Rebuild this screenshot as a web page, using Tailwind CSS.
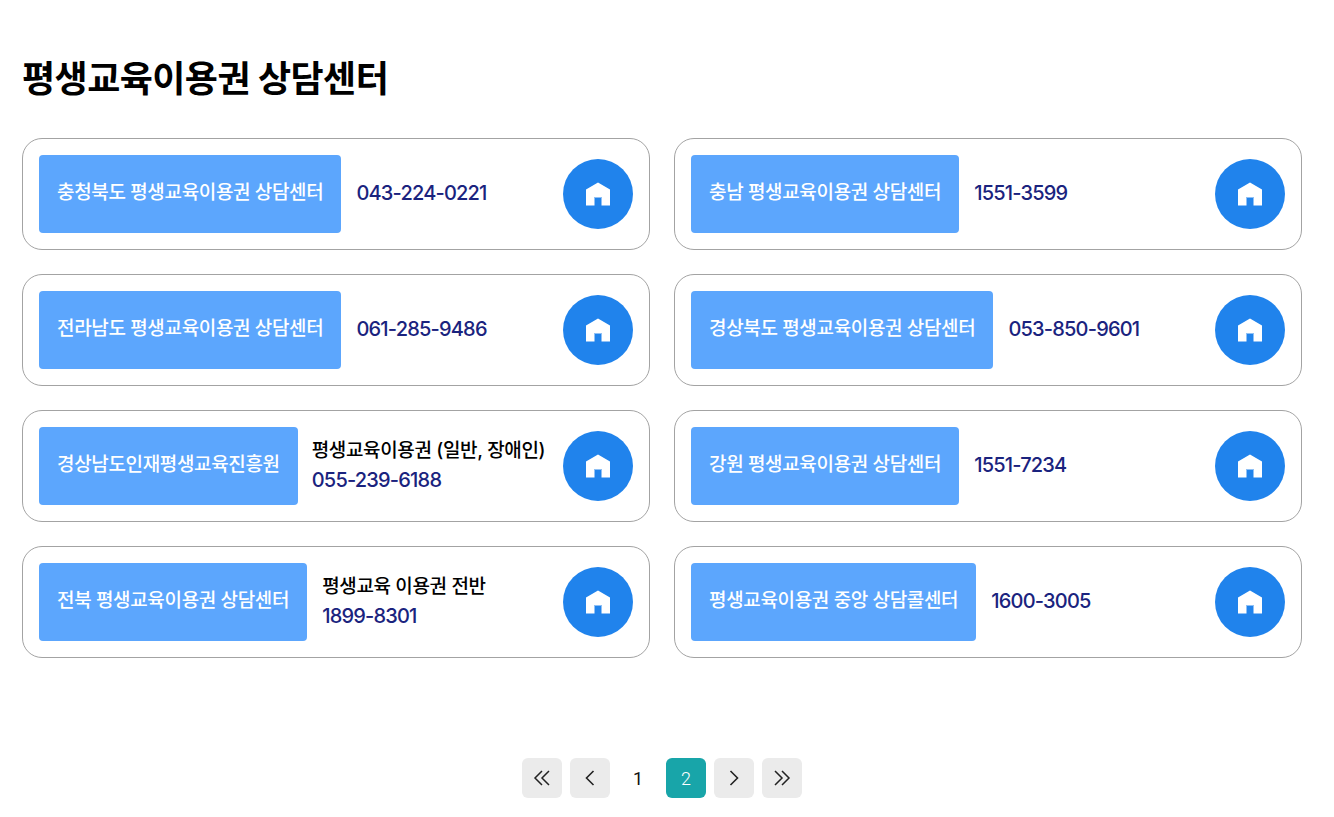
<!DOCTYPE html>
<html lang="ko">
<head>
    <meta charset="UTF-8">
    <title>평생교육이용권 상담센터</title>
    <script src="https://cdn.jsdelivr.net/npm/@tailwindcss/browser@4"></script>
</head>
<body class="bg-white font-['Inter','Noto_Sans_CJK_KR',sans-serif]">
    <div class="w-[1334px] h-[817px] overflow-hidden pl-[22px] pr-[32px] pt-[55px]">
        <h1 class="text-[36px] leading-[48px] font-bold text-black tracking-[-0.55px]">평생교육이용권 상담센터</h1>

        <div class="grid grid-cols-2 gap-x-[24px] gap-y-[24px] mt-[35px]">
            <!-- row 1 -->
            <div class="h-[112px] border border-[#a3a3a3] rounded-[20px] p-[16px] flex items-center justify-between">
                <div class="flex items-center gap-[15px]">
                    <div class="h-[78px] pb-[1px] px-[18px] flex items-center bg-[#5ca6fd] rounded-[4px] text-white text-[19px] font-medium tracking-[-0.35px] whitespace-nowrap">충청북도 평생교육이용권 상담센터</div>
                    <div class="pb-[2px] text-[#1a237e] text-[20px] font-medium tracking-[-0.8px]">043-224-0221</div>
                </div>
                <a class="w-[70px] h-[70px] rounded-full bg-[#2083ec] flex items-center justify-center shrink-0"><svg width="26" height="24" viewBox="0 0 26 24"><path fill="#fff" d="M13 .5 L25 7.5 V23.5 H16.5 V15 H9.5 V23.5 H1 V7.5 Z"/><path fill="#8fc0f5" d="M9.5 15h7v1h-7z"/></svg></a>
            </div>
            <div class="h-[112px] border border-[#a3a3a3] rounded-[20px] p-[16px] flex items-center justify-between">
                <div class="flex items-center gap-[15px]">
                    <div class="h-[78px] pb-[1px] px-[18px] flex items-center bg-[#5ca6fd] rounded-[4px] text-white text-[19px] font-medium tracking-[-0.35px] whitespace-nowrap">충남 평생교육이용권 상담센터</div>
                    <div class="pb-[2px] text-[#1a237e] text-[20px] font-medium tracking-[-0.8px]">1551-3599</div>
                </div>
                <a class="w-[70px] h-[70px] rounded-full bg-[#2083ec] flex items-center justify-center shrink-0"><svg width="26" height="24" viewBox="0 0 26 24"><path fill="#fff" d="M13 .5 L25 7.5 V23.5 H16.5 V15 H9.5 V23.5 H1 V7.5 Z"/><path fill="#8fc0f5" d="M9.5 15h7v1h-7z"/></svg></a>
            </div>
            <!-- row 2 -->
            <div class="h-[112px] border border-[#a3a3a3] rounded-[20px] p-[16px] flex items-center justify-between">
                <div class="flex items-center gap-[15px]">
                    <div class="h-[78px] pb-[1px] px-[18px] flex items-center bg-[#5ca6fd] rounded-[4px] text-white text-[19px] font-medium tracking-[-0.35px] whitespace-nowrap">전라남도 평생교육이용권 상담센터</div>
                    <div class="pb-[2px] text-[#1a237e] text-[20px] font-medium tracking-[-0.8px]">061-285-9486</div>
                </div>
                <a class="w-[70px] h-[70px] rounded-full bg-[#2083ec] flex items-center justify-center shrink-0"><svg width="26" height="24" viewBox="0 0 26 24"><path fill="#fff" d="M13 .5 L25 7.5 V23.5 H16.5 V15 H9.5 V23.5 H1 V7.5 Z"/><path fill="#8fc0f5" d="M9.5 15h7v1h-7z"/></svg></a>
            </div>
            <div class="h-[112px] border border-[#a3a3a3] rounded-[20px] p-[16px] flex items-center justify-between">
                <div class="flex items-center gap-[15px]">
                    <div class="h-[78px] pb-[1px] px-[18px] flex items-center bg-[#5ca6fd] rounded-[4px] text-white text-[19px] font-medium tracking-[-0.35px] whitespace-nowrap">경상북도 평생교육이용권 상담센터</div>
                    <div class="pb-[2px] text-[#1a237e] text-[20px] font-medium tracking-[-0.8px]">053-850-9601</div>
                </div>
                <a class="w-[70px] h-[70px] rounded-full bg-[#2083ec] flex items-center justify-center shrink-0"><svg width="26" height="24" viewBox="0 0 26 24"><path fill="#fff" d="M13 .5 L25 7.5 V23.5 H16.5 V15 H9.5 V23.5 H1 V7.5 Z"/><path fill="#8fc0f5" d="M9.5 15h7v1h-7z"/></svg></a>
            </div>
            <!-- row 3 -->
            <div class="h-[112px] border border-[#a3a3a3] rounded-[20px] p-[16px] flex items-center justify-between">
                <div class="flex items-center gap-[15px]">
                    <div class="h-[78px] pb-[1px] px-[18px] flex items-center bg-[#5ca6fd] rounded-[4px] text-white text-[19px] font-medium tracking-[-0.35px] whitespace-nowrap">경상남도인재평생교육진흥원</div>
                    <div class="flex flex-col gap-[1px] -ml-[1px] pb-[2px]">
                        <div class="text-black text-[19px] font-medium tracking-[-0.35px] leading-[28px] whitespace-nowrap">평생교육이용권 (일반, 장애인)</div>
                        <div class="text-[#1a237e] text-[20px] font-medium tracking-[-0.8px] leading-[28px]">055-239-6188</div>
                    </div>
                </div>
                <a class="w-[70px] h-[70px] rounded-full bg-[#2083ec] flex items-center justify-center shrink-0"><svg width="26" height="24" viewBox="0 0 26 24"><path fill="#fff" d="M13 .5 L25 7.5 V23.5 H16.5 V15 H9.5 V23.5 H1 V7.5 Z"/><path fill="#8fc0f5" d="M9.5 15h7v1h-7z"/></svg></a>
            </div>
            <div class="h-[112px] border border-[#a3a3a3] rounded-[20px] p-[16px] flex items-center justify-between">
                <div class="flex items-center gap-[15px]">
                    <div class="h-[78px] pb-[1px] px-[18px] flex items-center bg-[#5ca6fd] rounded-[4px] text-white text-[19px] font-medium tracking-[-0.35px] whitespace-nowrap">강원 평생교육이용권 상담센터</div>
                    <div class="pb-[2px] text-[#1a237e] text-[20px] font-medium tracking-[-0.8px]">1551-7234</div>
                </div>
                <a class="w-[70px] h-[70px] rounded-full bg-[#2083ec] flex items-center justify-center shrink-0"><svg width="26" height="24" viewBox="0 0 26 24"><path fill="#fff" d="M13 .5 L25 7.5 V23.5 H16.5 V15 H9.5 V23.5 H1 V7.5 Z"/><path fill="#8fc0f5" d="M9.5 15h7v1h-7z"/></svg></a>
            </div>
            <!-- row 4 -->
            <div class="h-[112px] border border-[#a3a3a3] rounded-[20px] p-[16px] flex items-center justify-between">
                <div class="flex items-center gap-[15px]">
                    <div class="h-[78px] pb-[1px] px-[18px] flex items-center bg-[#5ca6fd] rounded-[4px] text-white text-[19px] font-medium tracking-[-0.35px] whitespace-nowrap">전북 평생교육이용권 상담센터</div>
                    <div class="flex flex-col gap-[1px] pb-[2px]">
                        <div class="text-black text-[19px] font-medium tracking-[-0.35px] leading-[28px] whitespace-nowrap">평생교육 이용권 전반</div>
                        <div class="text-[#1a237e] text-[20px] font-medium tracking-[-0.8px] leading-[28px]">1899-8301</div>
                    </div>
                </div>
                <a class="w-[70px] h-[70px] rounded-full bg-[#2083ec] flex items-center justify-center shrink-0"><svg width="26" height="24" viewBox="0 0 26 24"><path fill="#fff" d="M13 .5 L25 7.5 V23.5 H16.5 V15 H9.5 V23.5 H1 V7.5 Z"/><path fill="#8fc0f5" d="M9.5 15h7v1h-7z"/></svg></a>
            </div>
            <div class="h-[112px] border border-[#a3a3a3] rounded-[20px] p-[16px] flex items-center justify-between">
                <div class="flex items-center gap-[15px]">
                    <div class="h-[78px] pb-[1px] px-[18px] flex items-center bg-[#5ca6fd] rounded-[4px] text-white text-[19px] font-medium tracking-[-0.35px] whitespace-nowrap">평생교육이용권 중앙 상담콜센터</div>
                    <div class="pb-[2px] text-[#1a237e] text-[20px] font-medium tracking-[-0.8px]">1600-3005</div>
                </div>
                <a class="w-[70px] h-[70px] rounded-full bg-[#2083ec] flex items-center justify-center shrink-0"><svg width="26" height="24" viewBox="0 0 26 24"><path fill="#fff" d="M13 .5 L25 7.5 V23.5 H16.5 V15 H9.5 V23.5 H1 V7.5 Z"/><path fill="#8fc0f5" d="M9.5 15h7v1h-7z"/></svg></a>
            </div>
        </div>

        <!-- pagination -->
        <div class="flex justify-center gap-[8px] mt-[100px] text-[18px] font-['Roboto',sans-serif]">
            <a class="w-[40px] h-[40px] rounded-[6px] bg-[#ebebeb] flex items-center justify-center"><svg width="18" height="16" viewBox="0 0 18 16" fill="none" stroke="#222" stroke-width="1.5"><path d="M9 1 L2 8 L9 15M16 1 L9 8 L16 15"/></svg></a>
            <a class="w-[40px] h-[40px] rounded-[6px] bg-[#ebebeb] flex items-center justify-center"><svg width="10" height="16" viewBox="0 0 10 16" fill="none" stroke="#222" stroke-width="1.6"><path d="M8.5 1 L1.5 8 L8.5 15"/></svg></a>
            <a class="w-[40px] h-[40px] rounded-[6px] flex items-center justify-center text-[#111]">1</a>
            <a class="w-[40px] h-[40px] rounded-[6px] bg-[#18a5a9] text-white flex items-center justify-center font-light">2</a>
            <a class="w-[40px] h-[40px] rounded-[6px] bg-[#ebebeb] flex items-center justify-center"><svg width="10" height="16" viewBox="0 0 10 16" fill="none" stroke="#222" stroke-width="1.6"><path d="M1.5 1 L8.5 8 L1.5 15"/></svg></a>
            <a class="w-[40px] h-[40px] rounded-[6px] bg-[#ebebeb] flex items-center justify-center"><svg width="18" height="16" viewBox="0 0 18 16" fill="none" stroke="#222" stroke-width="1.5"><path d="M2 1 L9 8 L2 15M9 1 L16 8 L9 15"/></svg></a>
        </div>
    </div>
</body>
</html>
